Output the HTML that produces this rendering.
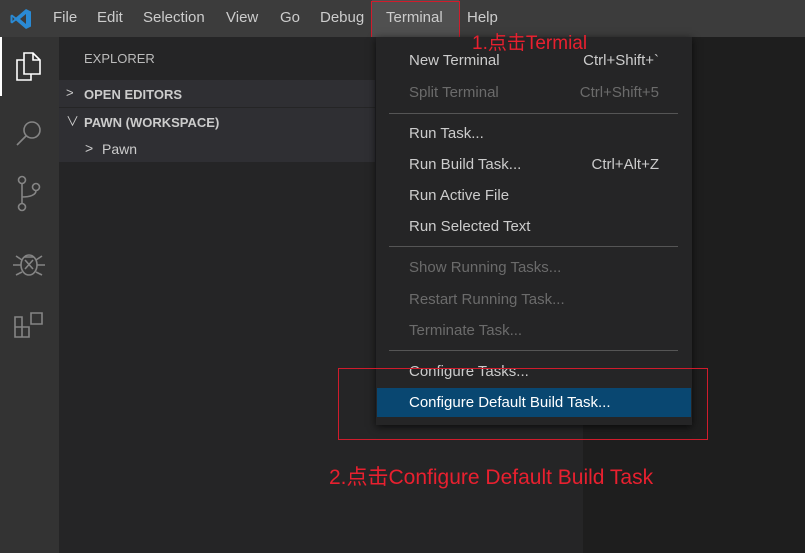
<!DOCTYPE html>
<html><head><meta charset="utf-8"><style>
*{margin:0;padding:0;box-sizing:border-box}
body{width:805px;height:553px;overflow:hidden;background:#1e1e1e;font-family:"Liberation Sans","Noto Sans CJK SC",sans-serif;position:relative;color:#ccc}
.abs{position:absolute}
#title{left:0;top:0;width:805px;height:37px;background:#3c3c3c}
.m{position:absolute;top:9px;font-size:15px;color:#ccc}
#act{left:0;top:37px;width:59px;height:516px;background:#333}
#side{left:59px;top:37px;width:524px;height:516px;background:#252526}
.row{position:absolute;left:59px;width:316px;height:27px;background:#2f2f33;font-size:13px;color:#ccc;font-weight:bold}
#menu{left:376px;top:37px;width:316px;height:388px;background:#252526;box-shadow:0 2px 8px rgba(0,0,0,.7)}
.it{position:absolute;left:33px;font-size:15px;color:#ccc}
.k{position:absolute;right:33px;font-size:15px;color:#ccc}
.dis{color:#6b6b6b}
.sep{position:absolute;left:13px;width:289px;height:1px;background:#555}
.red{color:#e8202f;font-size:19px;position:absolute}
</style></head><body>
<div id="title" class="abs"></div>
<svg class="abs" style="left:9px;top:7px" width="24" height="24" viewBox="0 0 24 24"><path d="M17 2 L22 4.5 V19.5 L17 22 L7 13.5 L3 16.5 L1.5 15.5 V8.5 L3 7.5 L7 10.5 Z M17 7 L11 12 L17 17 Z M3.5 10 V14 L5.5 12 Z" fill="#2a8ad4" fill-rule="evenodd"/></svg>
<span class="m" style="left:53px">File</span>
<span class="m" style="left:97px">Edit</span>
<span class="m" style="left:143px">Selection</span>
<span class="m" style="left:226px">View</span>
<span class="m" style="left:280px">Go</span>
<span class="m" style="left:320px">Debug</span>
<div class="abs" style="left:372px;top:0;width:87px;height:37px;background:#505050"></div>
<span class="m" style="left:386px">Terminal</span>
<span class="m" style="left:467px">Help</span>
<div class="abs" style="left:371px;top:1px;width:89px;height:43px;border:1px solid #d01c2c"></div>
<div id="act" class="abs"></div>
<div class="abs" style="left:0;top:37px;width:2px;height:59px;background:#fff"></div>
<svg class="abs" style="left:0;top:37px" width="59" height="320" viewBox="0 0 59 320" fill="none" stroke="#858585" stroke-width="1.6">
<path d="M24 16 h9 l7 7 v14 h-16 z M33 16 v7 h7" stroke="#fff"/><path d="M24 23 h-7 v20 h14 v-6" stroke="#fff"/>
<circle cx="32" cy="93" r="8"/><path d="M26 99 L17 108"/>
<circle cx="22" cy="143" r="3.5"/><circle cx="22" cy="170" r="3.5"/><circle cx="36" cy="150" r="3.5"/><path d="M22 146.5 V166.5 M22 160 C30 160 36 158 36 153.5"/>
<ellipse cx="29" cy="228" rx="8" ry="10"/><path d="M24 220 h10 M25 223 l8 9 M33 223 l-8 9 M13 228 h8 M37 228 h8 M16 219 l6 4 M42 219 l-6 4 M16 238 l6-3 M42 238 l-6-3"/>
<path d="M15 290 h7 v10 h-7 z M15 290 v-10 h7 v10 M22 290 h7 v10 h-7 M31 276 h11 v11 h-11 z"/>
</svg>
<div id="side" class="abs"></div>
<span class="abs" style="left:84px;top:51px;font-size:13px;color:#bbb">EXPLORER</span>
<div class="row" style="top:80px"><span class="abs" style="left:7px;top:5px;font-weight:normal">&gt;</span><span class="abs" style="left:25px;top:7px">OPEN EDITORS</span></div>
<div class="row" style="top:108px"><span class="abs" style="left:7px;top:3px;font-weight:normal">&#8744;</span><span class="abs" style="left:25px;top:7px">PAWN (WORKSPACE)</span></div>
<div class="row" style="top:135px;font-weight:normal;font-size:14px"><span class="abs" style="left:26px;top:5px">&gt;</span><span class="abs" style="left:43px;top:6px">Pawn</span></div>
<div id="menu" class="abs">
<span class="it" style="top:15px">New Terminal</span><span class="k" style="top:15px">Ctrl+Shift+`</span>
<span class="it dis" style="top:47px">Split Terminal</span><span class="k dis" style="top:47px">Ctrl+Shift+5</span>
<div class="sep" style="top:76px"></div>
<span class="it" style="top:88px">Run Task...</span>
<span class="it" style="top:119px">Run Build Task...</span><span class="k" style="top:119px">Ctrl+Alt+Z</span>
<span class="it" style="top:150px">Run Active File</span>
<span class="it" style="top:181px">Run Selected Text</span>
<div class="sep" style="top:209px"></div>
<span class="it dis" style="top:222px">Show Running Tasks...</span>
<span class="it dis" style="top:254px">Restart Running Task...</span>
<span class="it dis" style="top:285px">Terminate Task...</span>
<div class="sep" style="top:313px"></div>
<span class="it" style="top:326px">Configure Tasks...</span>
<div class="abs" style="left:1px;top:351px;width:314px;height:29px;background:#094771"></div>
<span class="it" style="top:357px;color:#fff">Configure Default Build Task...</span>
</div>
<div class="abs" style="left:338px;top:368px;width:370px;height:72px;border:1px solid #d01c2c"></div>
<span class="red" style="left:472px;top:28px">1.点击Termial</span>
<span class="red" style="left:329px;top:461px;font-size:21px">2.点击Configure Default Build Task</span>
</body></html>
